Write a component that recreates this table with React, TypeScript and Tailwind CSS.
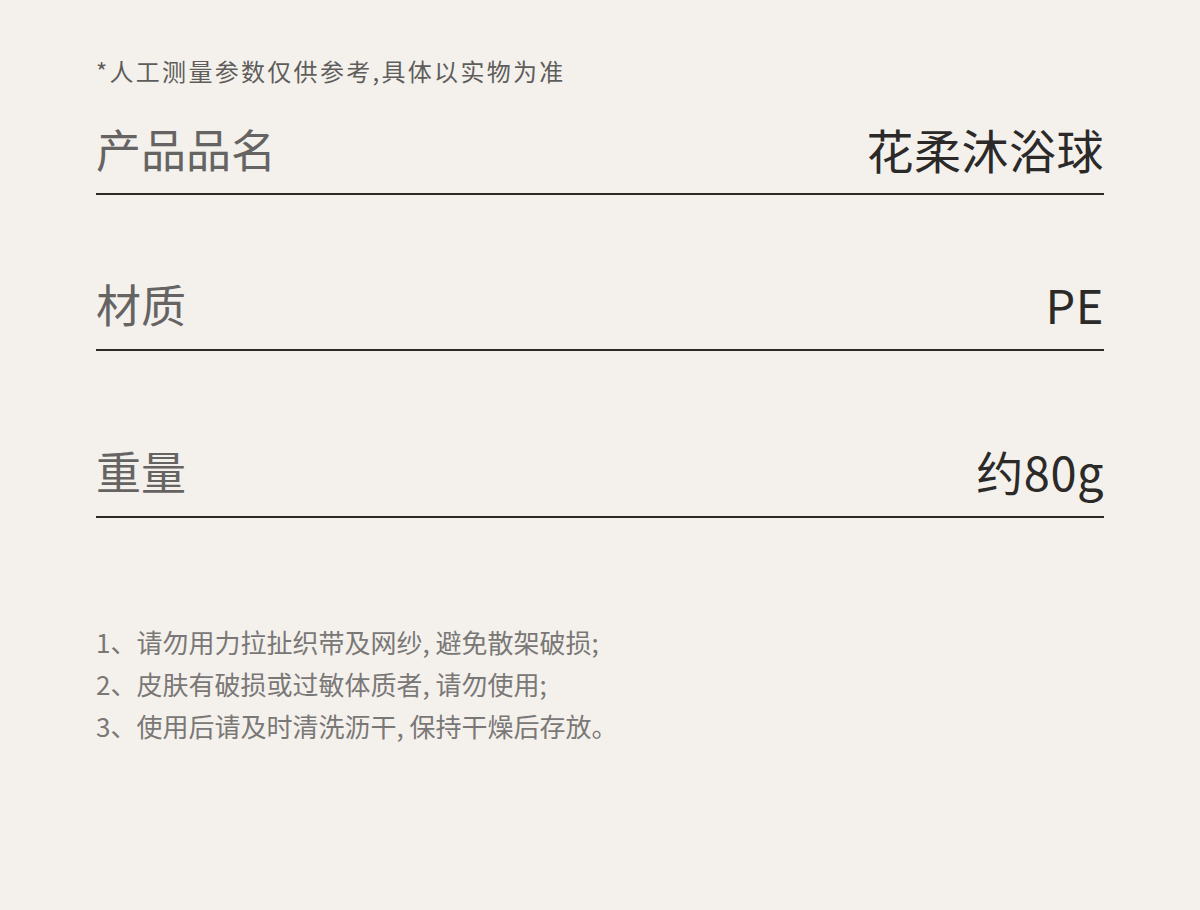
import React from "react";

const font = { fontFamily: '"Noto Sans CJK SC", "Noto Sans", sans-serif' };

function Row({ label, value, className }: { label: string; value: string; className: string }) {
  return (
    <div className={`flex items-end justify-between border-b-2 border-[#2b2a29] ${className}`}>
      <span className="text-[45px] leading-[60px] text-[#666463]">{label}</span>
      <span className="text-[47px] leading-[60px] text-[#2b2a29] tracking-[0.5px]">{value}</span>
    </div>
  );
}

export default function App() {
  return (
    <div className="w-[1200px] h-[910px] bg-[#f4f1ed] px-[96px] pt-[56px]" style={font}>
      <div className="text-[24px] leading-[30px] text-[#5f5d5b] tracking-[2.3px]">*人工测量参数仅供参考,具体以实物为准</div>
      <Row label="产品品名" value="花柔沐浴球" className="mt-[33px] pb-[14px]" />
      <Row label="材质" value="PE" className="mt-[79px] pb-[15px]" />
      <Row label="重量" value="约80g" className="mt-[90px] pb-[15px]" />
      <div className="mt-[103px] text-[26px] leading-[42px] text-[#7a7876]">
        <div>1、请勿用力拉扯织带及网纱, 避免散架破损;</div>
        <div>2、皮肤有破损或过敏体质者, 请勿使用;</div>
        <div>3、使用后请及时清洗沥干, 保持干燥后存放。</div>
      </div>
    </div>
  );
}
